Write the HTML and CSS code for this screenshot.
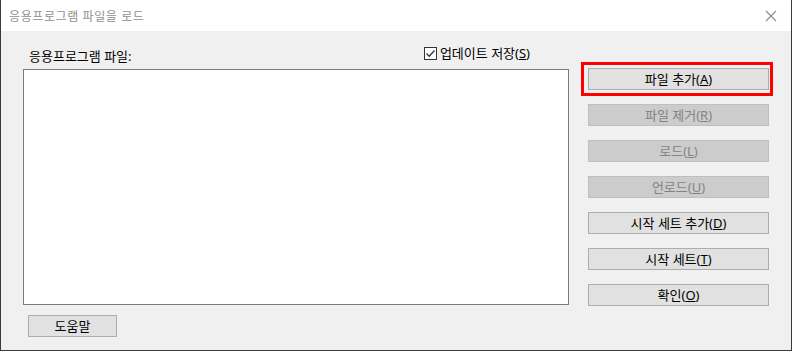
FILE: index.html
```html
<!DOCTYPE html>
<html lang="ko">
<head>
    <meta charset="UTF-8">
    <title>응용프로그램 파일을 로드</title>
    <link rel="stylesheet" href="styles.css">
</head>
<body>
    <div class="window">
        <div class="titlebar">
            <span class="title">응용프로그램 파일을 로드</span>
            <svg class="close" width="12" height="12" viewBox="0 0 12 12">
                <path d="M1 1 L11 11 M11 1 L1 11" stroke="#8a8a8a" stroke-width="1.1" fill="none"/>
            </svg>
        </div>
        <div class="content">
            <div class="left">
                <div class="label-row">
                    <span class="label">응용프로그램 파일:</span>
                    <label class="check">
                        <svg class="box" width="13" height="13" viewBox="0 0 13 13">
                            <rect x="0.5" y="0.5" width="12" height="12" fill="#fff" stroke="#333"/>
                            <path d="M2.5 6.5 L5.2 9.2 L10.5 3.5" stroke="#333" stroke-width="1.3" fill="none"/>
                        </svg>
                        <span>업데이트 저장(<u>S</u>)</span>
                    </label>
                </div>
                <div class="listbox"></div>
                <button class="btn help">도움말</button>
            </div>
            <div class="right">
                <div class="focus-wrap">
                    <button class="btn">파일 추가(<u>A</u>)</button>
                    <span class="highlight"></span>
                </div>
                <button class="btn disabled">파일 제거(<u>R</u>)</button>
                <button class="btn disabled">로드(<u>L</u>)</button>
                <button class="btn disabled">언로드(<u>U</u>)</button>
                <button class="btn">시작 세트 추가(<u>D</u>)</button>
                <button class="btn">시작 세트(<u>T</u>)</button>
                <button class="btn">확인(<u>O</u>)</button>
            </div>
        </div>
    </div>
</body>
</html>
```

FILE: styles.css
```css
body {
    margin: 0;
    font-family: "Noto Sans", "Noto Sans CJK KR", sans-serif;
    font-size: 13px;
    color: #000;
}
.window {
    width: 792px;
    height: 351px;
    box-sizing: border-box;
    border: 1px solid #3a3a3a;
    border-top: none;
    background-color: #f0f0f0;
}
.titlebar {
    height: 31px;
    background-color: #ffffff;
    display: flex;
    align-items: center;
    justify-content: space-between;
    padding: 0 14px 0 8px;
}
.title {
    color: #8f8f8f;
    font-size: 12px;
    letter-spacing: 0.6px;
}
.content {
    display: flex;
    padding-left: 22px;
}
.left {
    width: 546px;
}
.label-row {
    height: 38px;
    display: flex;
    align-items: flex-end;
    justify-content: space-between;
    padding: 0 39px 0 6px;
    box-sizing: border-box;
    line-height: 16px;
}
.label-row .label {
    padding-bottom: 5px;
}
.check {
    display: flex;
    align-items: center;
    gap: 3px;
    padding-bottom: 8px;
}
.listbox {
    height: 236px;
    box-sizing: border-box;
    background-color: #ffffff;
    border: 1px solid #7a7a7a;
}
.right {
    width: 181px;
    margin-left: 19px;
    padding-top: 37px;
    display: flex;
    flex-direction: column;
    gap: 14px;
}
.btn {
    display: block;
    width: 181px;
    height: 22px;
    padding: 0;
    box-sizing: border-box;
    border: 1px solid #adadad;
    background-color: #e1e1e1;
    font-family: inherit;
    font-size: 13px;
    color: #000;
    line-height: 18px;
}
.btn.disabled {
    background-color: #cccccc;
    border-color: #bfbfbf;
    color: #838383;
}
.btn.help {
    width: 89px;
    margin: 10px 0 0 5px;
}
.focus-wrap {
    position: relative;
}
.highlight {
    position: absolute;
    left: -7px;
    top: -6px;
    width: 192px;
    height: 34px;
    box-sizing: border-box;
    border: 3px solid #ff0000;
}
```
